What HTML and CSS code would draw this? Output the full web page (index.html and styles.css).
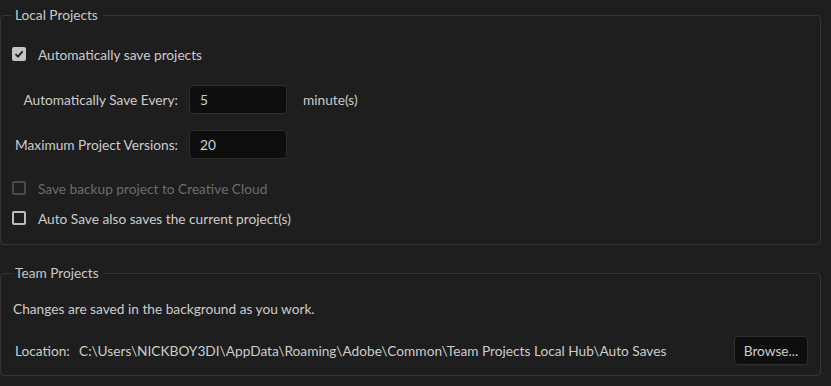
FILE: index.html
```html
<!DOCTYPE html>
<html lang="en">
<head>
  <meta charset="UTF-8" />
  <title>Auto Save Preferences</title>
  <link rel="stylesheet" href="styles.css">
</head>
<body>

  <fieldset class="group local">
    <legend>Local Projects</legend>

    <div class="check-row first">
      <span class="box checked">
        <svg width="10" height="10" viewBox="0 0 10 10"><path d="M1.5 5.2 L4 7.7 L8.6 2.3" fill="none" stroke="#1e1e1e" stroke-width="1.8"/></svg>
      </span>
      <span class="label">Automatically save projects</span>
    </div>

    <div class="field-row">
      <span class="field-label">Automatically Save Every:</span>
      <div class="input">5</div>
      <span class="unit">minute(s)</span>
    </div>

    <div class="field-row">
      <span class="field-label">Maximum Project Versions:</span>
      <div class="input">20</div>
    </div>

    <div class="check-row disabled">
      <span class="box"></span>
      <span class="label">Save backup project to Creative Cloud</span>
    </div>

    <div class="check-row last">
      <span class="box"></span>
      <span class="label">Auto Save also saves the current project(s)</span>
    </div>
  </fieldset>

  <fieldset class="group team">
    <legend>Team Projects</legend>
    <div class="note">Changes are saved in the background as you work.</div>
    <div class="location-row">
      <span class="loc-label">Location:</span>
      <span class="path">C:\Users\NICKBOY3DI\AppData\Roaming\Adobe\Common\Team Projects Local Hub\Auto Saves</span>
      <button class="browse">Browse...</button>
    </div>
  </fieldset>

</body>
</html>
```

FILE: styles.css
```css
body {
  font-family: Lato, "Open Sans", sans-serif;
  font-size: 13.7px;
  background-color: #1e1e1e;
  color: #cccccc;
  margin: 0;
  padding: 0;
  width: 831px;
  height: 386px;
  overflow: hidden;
}

.group {
  border: 1px solid #353535;
  border-radius: 4px;
  margin: 0 10px 0 0;
  padding: 0 12px 0 11px;
}

.group legend {
  padding: 0 5px 0 3px;
  margin-left: 0;
  line-height: 16px;
  color: #c8c8c8;
}

.local {
  margin-top: 7px;
  padding-top: 16px;
  padding-bottom: 14px;
}

.team {
  margin-top: 20px;
  padding-top: 18px;
  padding-bottom: 10px;
}

/* checkbox rows */
.check-row {
  display: flex;
  align-items: center;
  gap: 12px;
  height: 24px;
}

.check-row.first {
  height: 30px;
}

.check-row.disabled {
  margin-top: 17px;
  color: #6c6c6c;
}

.check-row.last {
  margin-top: 6px;
}

.box {
  width: 14px;
  height: 14px;
  box-sizing: border-box;
  border: 2px solid #bcbcbc;
  border-radius: 2px;
  display: flex;
  align-items: center;
  justify-content: center;
  flex-shrink: 0;
}

.box.checked {
  background-color: #c4c4c4;
  border-color: #c4c4c4;
}

.disabled .box {
  border-color: #4a4a4a;
}

/* label + input rows */
.field-row {
  display: flex;
  align-items: center;
  height: 30px;
  margin-top: 15px;
}

.field-label {
  width: 166px;
  text-align: right;
  margin-right: 11px;
  white-space: nowrap;
}

.input {
  width: 98px;
  height: 29px;
  box-sizing: border-box;
  background-color: #0e0e0e;
  border: 1px solid #2e2e2e;
  border-radius: 4px;
  padding-left: 10px;
  line-height: 27px;
  color: #d0d0d0;
}

.unit {
  margin-left: 16px;
}

/* team section */
.note {
  height: 20px;
  line-height: 20px;
  margin-left: 1px;
}

.location-row {
  display: flex;
  align-items: center;
  height: 30px;
  margin-top: 16px;
}

.loc-label {
  margin-left: 3px;
  width: 64px;
}

.path {
  flex: 1;
  white-space: nowrap;
}

.browse {
  width: 74px;
  height: 29px;
  background-color: #0e0e0e;
  border: 1px solid #2e2e2e;
  border-radius: 4px;
  color: #cccccc;
  font-family: inherit;
  font-size: 13.7px;
  padding: 0;
}
```
